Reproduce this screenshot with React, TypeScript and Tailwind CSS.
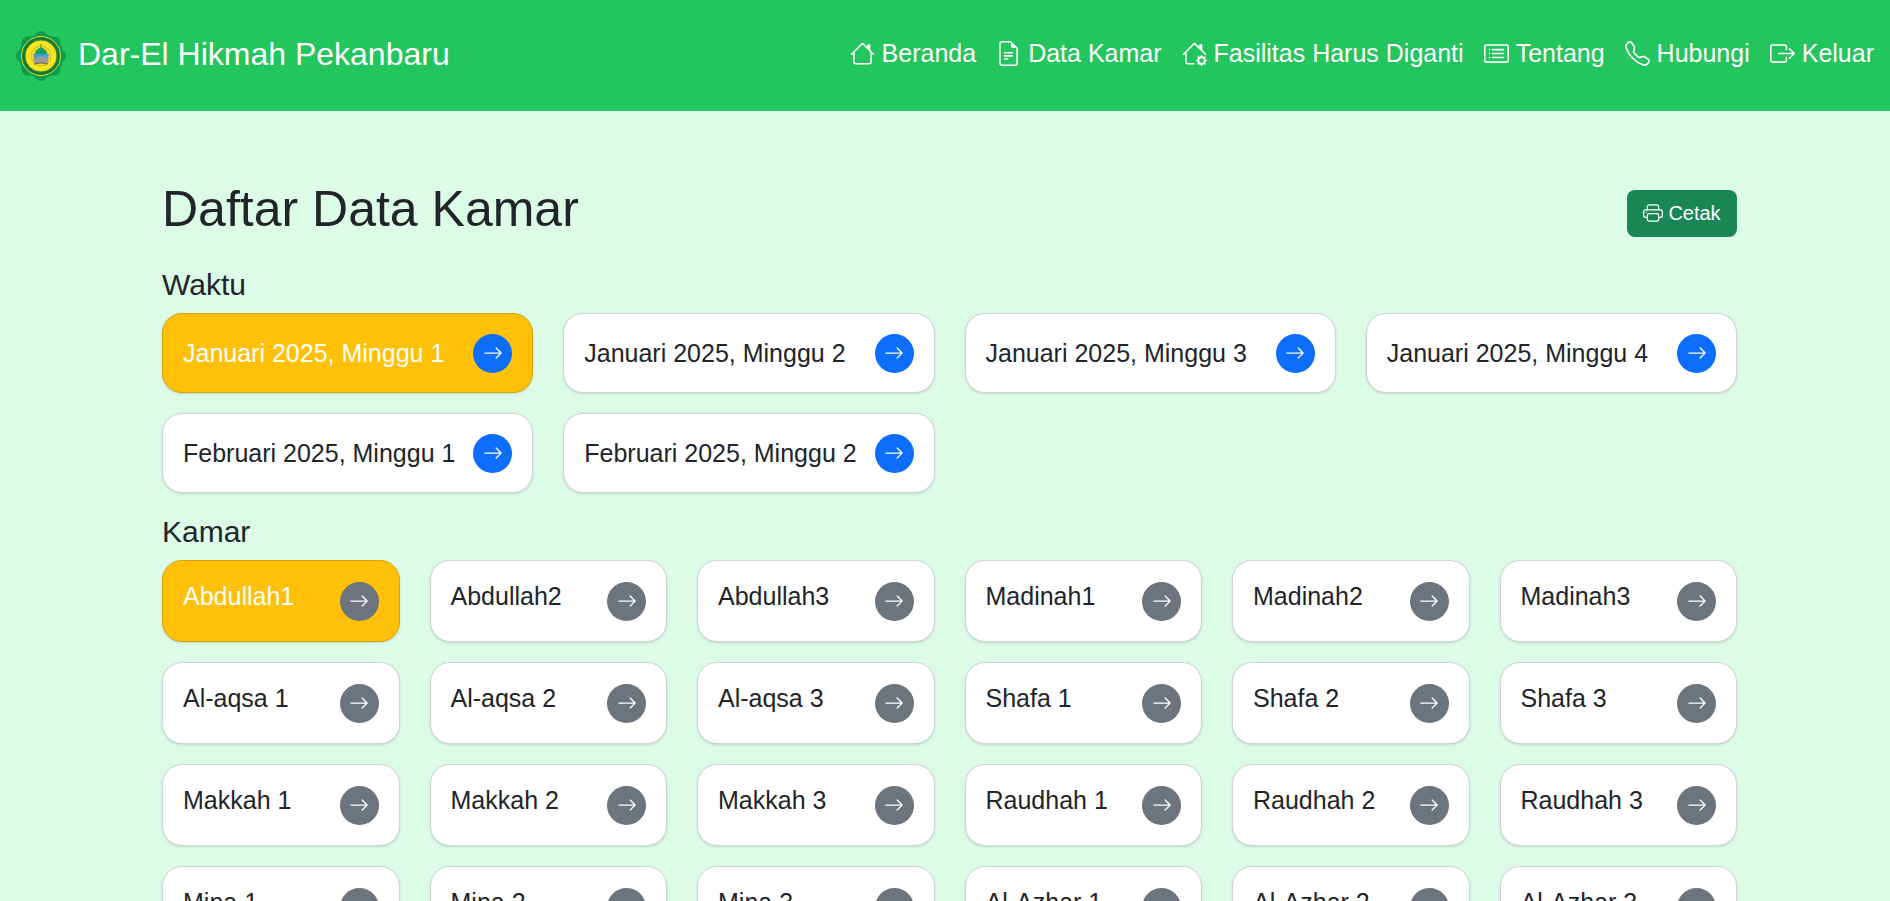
import {
  BsArrowRight,
  BsBoxArrowRight,
  BsCardList,
  BsFileEarmarkText,
  BsHouse,
  BsHouseGear,
  BsPrinter,
  BsTelephone,
} from "react-icons/bs"
import type { IconType } from "react-icons"

const navItems: { label: string; icon: IconType }[] = [
  { label: "Beranda", icon: BsHouse },
  { label: "Data Kamar", icon: BsFileEarmarkText },
  { label: "Fasilitas Harus Diganti", icon: BsHouseGear },
  { label: "Tentang", icon: BsCardList },
  { label: "Hubungi", icon: BsTelephone },
  { label: "Keluar", icon: BsBoxArrowRight },
]

const waktu = [
  "Januari 2025, Minggu 1",
  "Januari 2025, Minggu 2",
  "Januari 2025, Minggu 3",
  "Januari 2025, Minggu 4",
  "Februari 2025, Minggu 1",
  "Februari 2025, Minggu 2",
]

const kamar = [
  "Abdullah1",
  "Abdullah2",
  "Abdullah3",
  "Madinah1",
  "Madinah2",
  "Madinah3",
  "Al-aqsa 1",
  "Al-aqsa 2",
  "Al-aqsa 3",
  "Shafa 1",
  "Shafa 2",
  "Shafa 3",
  "Makkah 1",
  "Makkah 2",
  "Makkah 3",
  "Raudhah 1",
  "Raudhah 2",
  "Raudhah 3",
  "Mina 1",
  "Mina 2",
  "Mina 3",
  "Al-Azhar 1",
  "Al-Azhar 2",
  "Al-Azhar 3",
]

const Logo = () => (
  <svg viewBox="0 0 50 50" className="h-[50px] w-[50px] shrink-0">
    <g fill="#0c9b50">
      <circle cx="25" cy="25" r="22" />
      {[0, 45, 90, 135, 180, 225, 270, 315].map((a) => (
        <circle key={a} cx="25" cy="6.5" r="6.5" transform={`rotate(${a} 25 25)`} />
      ))}
    </g>
    <circle cx="25" cy="25" r="19.5" fill="#0f7a3c" stroke="#e8e01f" strokeWidth="1" />
    <circle cx="25" cy="25" r="16" fill="#fbe51a" stroke="#2c8f3f" strokeWidth="1" />
    <circle cx="25" cy="25" r="10" fill="#f5dc2a" stroke="#b8a51c" strokeWidth="0.6" />
    <path d="M19 23c0-4 3-5 6-7 3 2 6 3 6 7z" fill="#14a35a" />
    <rect x="24.5" y="13" width="1" height="3" fill="#14a35a" />
    <path d="M17 23h16l-1 4H18z" fill="#3aa0d8" />
    <path d="M17 27l8-2 8 2-2 6-6-1-6 1z" fill="#9a9a94" />
    <path d="M18 33l7-1 7 1" fill="none" stroke="#555" strokeWidth="0.8" />
  </svg>
)

const Arrow = ({ color }: { color: string }) => (
  <span className={`flex h-[39px] w-[39px] shrink-0 items-center justify-center rounded-full text-white ${color}`}>
    <BsArrowRight className="h-5 w-5" />
  </span>
)

const WaktuCard = ({ label, active }: { label: string; active: boolean }) => (
  <div
    className={`flex h-20 items-center justify-between rounded-[20px] border px-5 shadow-sm ${
      active ? "border-[#d9a406] bg-[#ffc107] text-white" : "border-[#d2d4d3] bg-white text-[#212529]"
    }`}
  >
    <span className="text-[25px] leading-9 whitespace-nowrap">{label}</span>
    <Arrow color="bg-[#0d6efd]" />
  </div>
)

const KamarCard = ({ label, active }: { label: string; active: boolean }) => (
  <div
    className={`flex h-[82px] items-center justify-between rounded-[20px] border px-5 shadow-sm ${
      active ? "border-[#d9a406] bg-[#ffc107] text-white" : "border-[#d2d4d3] bg-white text-[#212529]"
    }`}
  >
    <span className="mb-[10px] text-[25px] leading-9 whitespace-nowrap">{label}</span>
    <Arrow color="bg-[#6c757d]" />
  </div>
)

export default function App() {
  return (
    <div className="h-screen overflow-hidden bg-[#dcfce7] font-['Liberation_Sans',Arial,sans-serif] text-[#212529]">
      <nav className="flex h-[111px] items-center justify-between bg-[#22c55e] pr-4 pl-4 text-white">
        <div className="flex items-center gap-[12px]">
          <Logo />
          <span className="mb-[4px] text-[32px] whitespace-nowrap">Dar-El Hikmah Pekanbaru</span>
        </div>
        <ul className="mb-[4px] flex items-center gap-[20px]">
          {navItems.map(({ label, icon: Icon }) => (
            <li key={label} className="flex items-center gap-[7px] text-[25px] whitespace-nowrap">
              <Icon className="h-[25px] w-[25px]" />
              {label}
            </li>
          ))}
        </ul>
      </nav>

      <main className="pt-[68px] pr-[153px] pl-[162px]">
        <div className="flex items-center justify-between">
          <h1 className="text-[50px] leading-[60px]">Daftar Data Kamar</h1>
          <button className="mt-[8px] flex h-[47px] w-[110px] items-center justify-center gap-[5px] rounded-lg bg-[#198754] text-[20px] text-white">
            <BsPrinter className="h-5 w-5" />
            Cetak
          </button>
        </div>

        <h2 className="mt-[28px] text-[30px] leading-9">Waktu</h2>
        <div className="mt-[10px] grid grid-cols-4 gap-x-[30px] gap-y-5">
          {waktu.map((w, i) => (
            <WaktuCard key={w} label={w} active={i === 0} />
          ))}
        </div>

        <h2 className="mt-[21px] text-[30px] leading-9">Kamar</h2>
        <div className="mt-[10px] grid grid-cols-6 gap-x-[30px] gap-y-5">
          {kamar.map((k, i) => (
            <KamarCard key={k} label={k} active={i === 0} />
          ))}
        </div>
      </main>
    </div>
  )
}
